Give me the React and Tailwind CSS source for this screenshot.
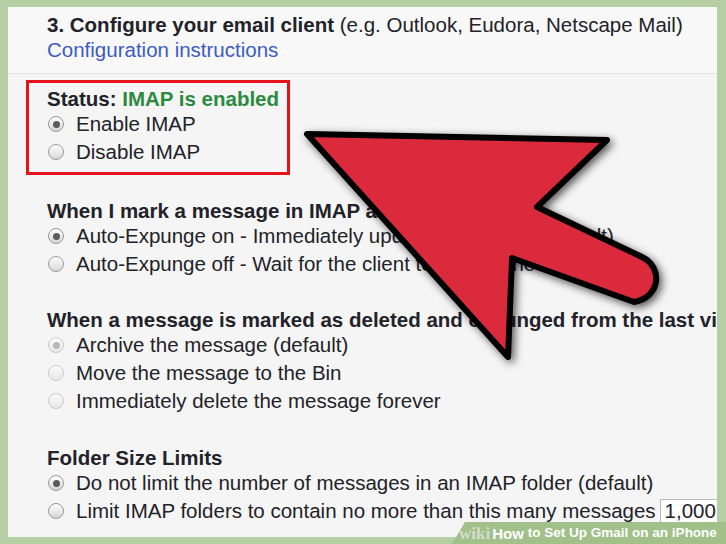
import React from "react";

const Radio = ({ checked, disabled }) => (
  <span
    className={`inline-flex w-[16px] h-[16px] shrink-0 items-center justify-center rounded-full border ${
      disabled
        ? "border-[#cacaca] bg-[linear-gradient(#fbfbfb,#e8e8e8)]"
        : "border-[#999999] bg-[linear-gradient(#ffffff,#d6d6d6)]"
    }`}
  >
    {checked && (
      <span
        className={`w-[7px] h-[7px] rounded-full ${
          disabled ? "bg-[#b8b8b8]" : "bg-[#5a5a5a]"
        }`}
      />
    )}
  </span>
);

const Option = ({ checked, disabled, children }) => (
  <div className="flex items-center h-[28px] pl-[1px]">
    <Radio checked={checked} disabled={disabled} />
    <span className="ml-[12px] flex items-center">{children}</span>
  </div>
);

const Heading = ({ className = "", children }) => (
  <div className={`font-bold leading-[22px] ${className}`}>{children}</div>
);

export default function App() {
  return (
    <div className="relative w-[726px] h-[544px] overflow-hidden bg-[#b6cfa2] pt-[7px] pl-[8px] pr-[9px] pb-[7px] font-['Liberation_Sans',Arial,sans-serif] text-[20.5px] text-[#222228]">
      <div className="h-full bg-[#f5f5f5] overflow-hidden whitespace-nowrap">
        <div className="pl-[39px] pt-[5px] pb-[11px] border-b border-[#e2e2e2] leading-[25px] bg-[#f8f8f8]">
          <div>
            <span className="font-bold">3. Configure your email client</span>{" "}
            (e.g. Outlook, Eudora, Netscape Mail)
          </div>
          <div className="text-[#3b5cc2]">Configuration instructions</div>
        </div>

        <div className="ml-[18px] mt-[6px] w-[264px] border-[3px] border-[#e5141c] pl-[18px] pt-[5px] pb-[6px]">
          <Heading>
            Status: <span className="text-[#2b8a3e]">IMAP is enabled</span>
          </Heading>
          <Option checked>Enable IMAP</Option>
          <Option>Disable IMAP</Option>
        </div>

        <div className="pl-[39px]">
          <Heading className="mt-[25px]">
            When I mark a message in IMAP as deleted:
          </Heading>
          <Option checked>
            Auto-Expunge on - Immediately update the server. (default)
          </Option>
          <Option>
            Auto-Expunge off - Wait for the client to update the server.
          </Option>

          <Heading className="mt-[31px]">
            When a message is marked as deleted and expunged from the last
            visible IMAP folder:
          </Heading>
          <Option checked disabled>
            Archive the message (default)
          </Option>
          <Option disabled>Move the message to the Bin</Option>
          <Option disabled>Immediately delete the message forever</Option>

          <Heading className="mt-[32px]">Folder Size Limits</Heading>
          <Option checked>
            Do not limit the number of messages in an IMAP folder (default)
          </Option>
          <Option>
            Limit IMAP folders to contain no more than this many messages
            <span className="ml-[4px] h-[24px] border border-[#b9b9b9] bg-white px-[4px] leading-[22px]">
              1,000
            </span>
          </Option>
        </div>
      </div>

      <svg
        className="absolute left-0 top-0 pointer-events-none"
        width="726"
        height="544"
        viewBox="0 0 726 544"
      >
        <defs>
          <filter id="sh" x="-20%" y="-20%" width="140%" height="140%">
            <feDropShadow
              dx="3"
              dy="3"
              stdDeviation="4"
              floodColor="#000"
              floodOpacity="0.65"
            />
          </filter>
        </defs>
        <path
          d="M307 134 L607 140 L537 207 L642 257 C663 267 661 297 634 302 L512 258 L508 357 Z"
          fill="#dc2b3d"
          stroke="#000"
          strokeWidth="6"
          strokeLinejoin="round"
          filter="url(#sh)"
        />
      </svg>

      <div className="absolute right-0 bottom-0 h-[22px] w-[274px] bg-[#a1c08a] [clip-path:polygon(13px_0,100%_0,100%_100%,0_100%)] flex items-center pl-[7px] whitespace-nowrap">
        <span className="font-['Liberation_Serif',serif] font-bold text-[17px] text-[#d6dccd] leading-none">
          wiki
        </span>
        <span className="ml-[2px] font-bold text-white text-[15px] leading-none">
          How
        </span>
        <span className="ml-[4px] font-bold text-white text-[13.5px] leading-none">
          to Set Up Gmail on an iPhone
        </span>
      </div>
    </div>
  );
}
